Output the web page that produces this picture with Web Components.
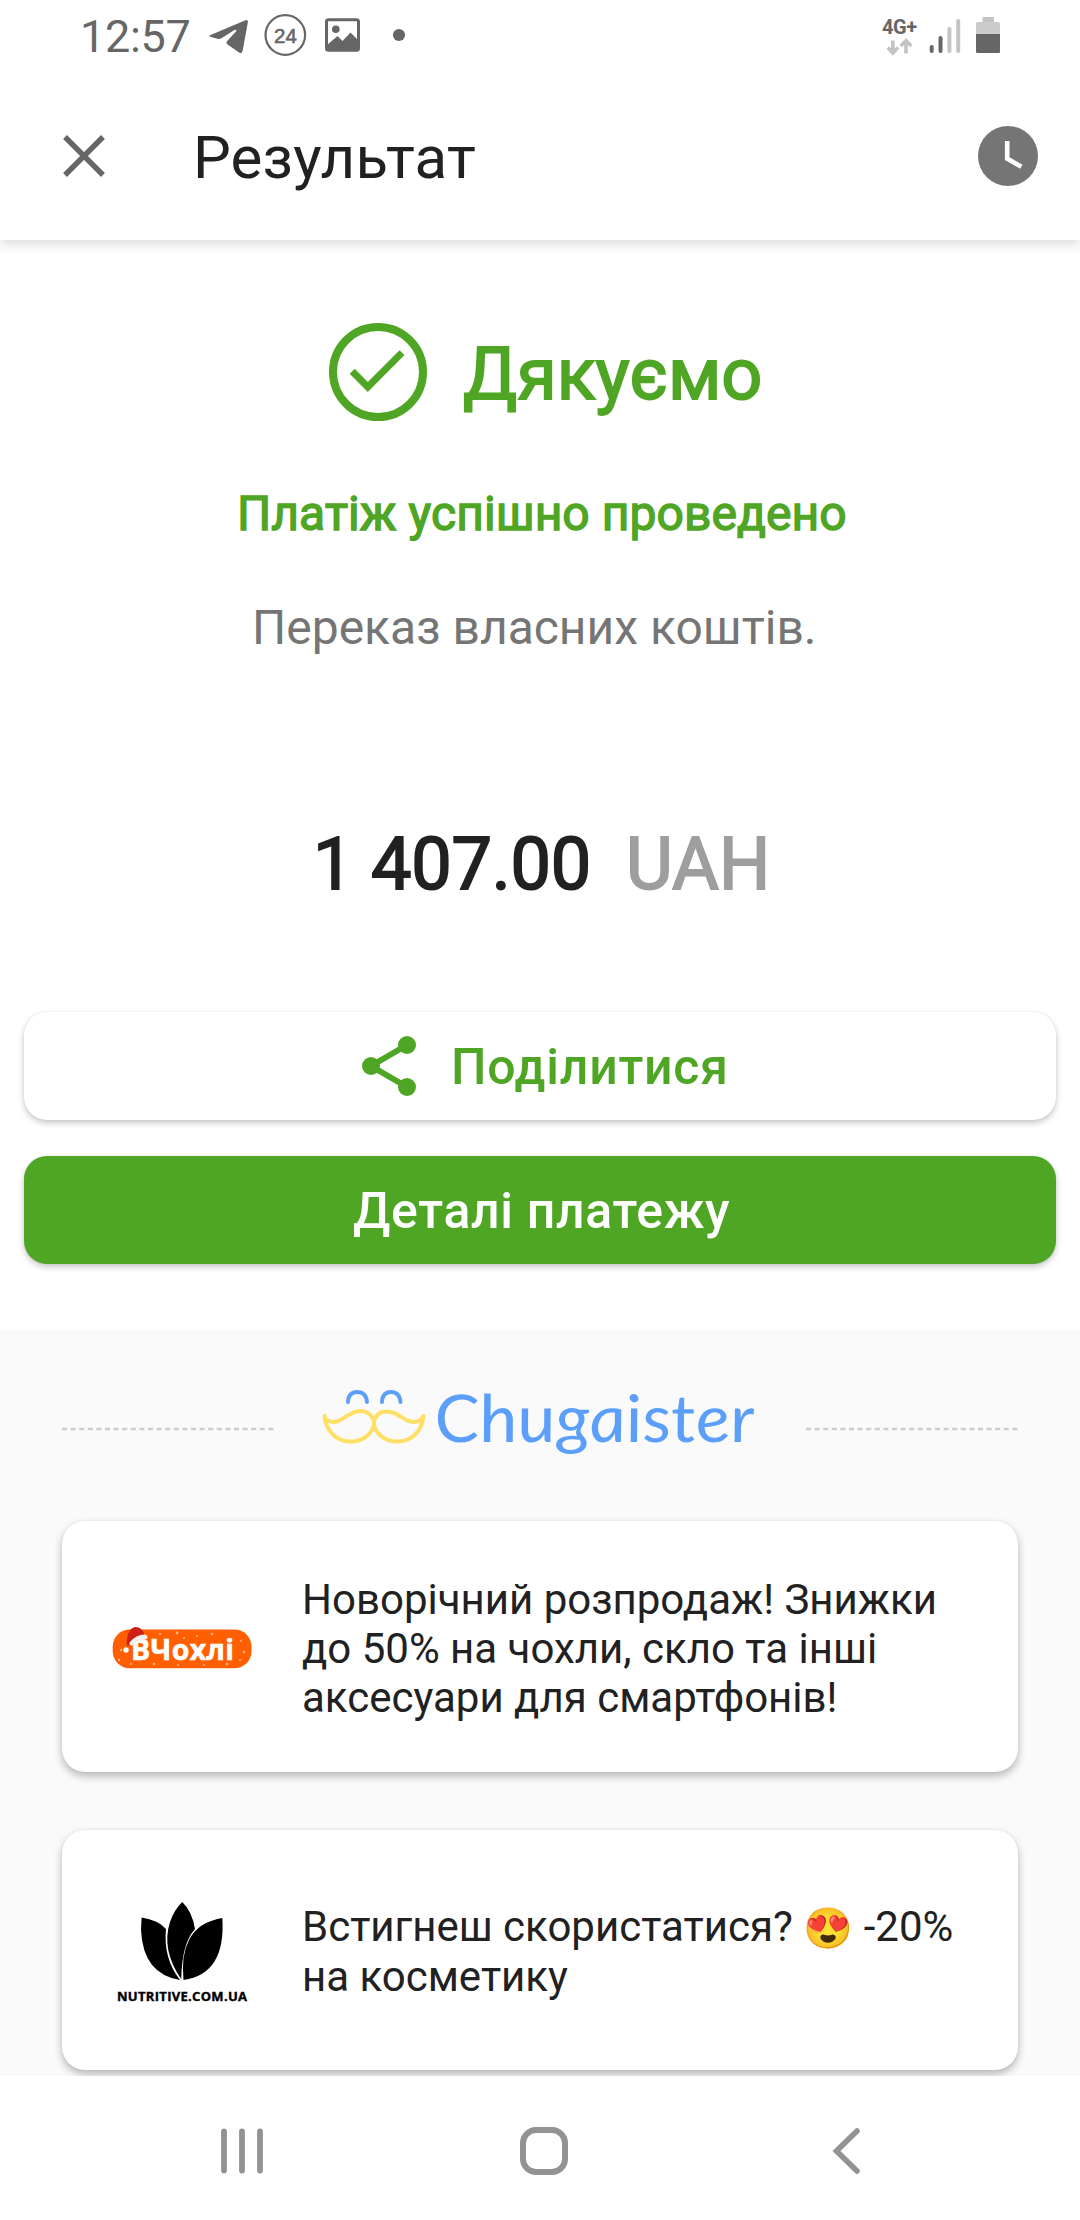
<!DOCTYPE html>
<html lang="uk">
<head>
<meta charset="utf-8">
<title>Результат</title>
<style>
html,body{margin:0;padding:0;background:#fff}
body{width:1080px;height:2220px;overflow:hidden;font-family:Roboto,"Noto Sans",sans-serif;color:#212121}
</style>
</head>
<body>
<payment-screen></payment-screen>
<script>
function define(name, html) {
  const t = document.createElement('template');
  t.innerHTML = html;
  customElements.define(name, class extends HTMLElement {
    constructor() {
      super();
      this.attachShadow({mode: 'open'}).append(t.content.cloneNode(true));
    }
  });
}

define('status-bar', `<style>
:host{display:flex;align-items:center;height:72px;padding-left:80px;color:#666;box-sizing:border-box}
svg{display:block;flex:none}
.time{width:129px;font-size:45px;line-height:72px;letter-spacing:-.3px;height:71px}
.gap{flex:1}
</style>
<span class="time">12:57</span>
<svg width="53" height="72" viewBox="209 0 53 72" fill="#666"><path d="M210 35.2 L245.5 20.2 Q248.3 19.4 247.8 22.4 L242.6 51 Q241.8 54 239 52.4 L227.6 44.6 Q225.6 43 227.2 41 L236.4 31 Q236.4 29.4 234.4 30 L221.5 38.2 Q219.5 39.3 217.2 38.8 L210.4 36.8 Q208.6 36 210 35.2Z"/></svg>
<svg width="63" height="72" viewBox="262 0 63 72"><circle cx="285.3" cy="35" r="19.8" fill="none" stroke="#666" stroke-width="2.2"/><text x="274" y="42.6" font-family="Liberation Sans,sans-serif" font-size="20.5" fill="#666" stroke="#666" stroke-width=".6">24</text></svg>
<svg width="60" height="72" viewBox="325 0 60 72"><rect x="326.5" y="19.8" width="32" height="30.5" rx="2" fill="none" stroke="#666" stroke-width="3"/><circle cx="335.8" cy="29.3" r="3.8" fill="#666"/><path d="M327 45 L337.5 36 L342.5 41 L350.5 32.5 L359 41 V51 H327Z" fill="#666"/></svg>
<svg width="30" height="72" viewBox="385 0 30 72"><circle cx="399" cy="35" r="6.1" fill="#666"/></svg>
<span class="gap"></span>
<svg width="48" height="72" viewBox="880 0 48 72"><text x="882" y="34" font-family="Roboto,sans-serif" font-weight="700" font-size="20" letter-spacing="-.4" fill="#666">4G+</text><path d="M892.8 40.5V53M887.8 47.5L892.8 53L898 47.5M906 53.5V41M900.8 46L906 40.6L911.3 46" fill="none" stroke="#c4c4c4" stroke-width="3.6"/></svg>
<svg width="40" height="72" viewBox="928 0 40 72" fill="none" stroke-width="4" stroke-linecap="round"><path d="M931.7 47V51M940.5 38V51" stroke="#666"/><path d="M949.4 29V51M958.2 21V51" stroke="#c4c4c4"/></svg>
<svg width="112" height="72" viewBox="968 0 112 72"><rect x="982.5" y="17" width="11.5" height="7" rx="1" fill="#c2c2c2"/><rect x="976" y="22" width="24" height="31" rx="1.5" fill="#cbcbcb"/><path d="M976 34H1000V51.5Q1000 53 998.5 53H977.5Q976 53 976 51.5Z" fill="#666"/></svg>`);

define('app-bar', `<style>
:host{display:flex;align-items:center;height:168px;padding:0 42px 0 63px;box-sizing:border-box;background:#fff;box-shadow:0 4px 12px rgba(0,0,0,.15);clip-path:inset(0 0 -24px 0);position:relative;z-index:1}
svg{display:block;flex:none}
h1{flex:1;margin:4px 0 0 88px;font-size:60px;line-height:80px;font-weight:400;letter-spacing:.15px}
</style>
<svg width="42" height="42" viewBox="0 0 42 42"><path d="M2 2L40 40M40 2L2 40" stroke="#666" stroke-width="5.4" fill="none"/></svg>
<h1><slot></slot></h1>
<svg width="60" height="60" viewBox="0 0 60 60"><circle cx="30" cy="30" r="30" fill="#757575"/><path d="M29.2 15V32.6L43.4 40.8" stroke="#fff" stroke-width="4.6" fill="none"/></svg>`);

define('payment-result', `<style>
:host{display:flex;flex-direction:column;height:772px;padding-top:83px;box-sizing:border-box}
svg{display:block;flex:none}
.thanks{display:flex;align-items:center;height:98px;padding-left:329px;color:#4fa524}
.thanks span{margin:6px 0 0 36px;font-size:72px;line-height:80px;letter-spacing:0;-webkit-text-stroke:1.8px #4fa524;white-space:nowrap}
.ok{margin:63px 0 0 237px;font-size:48px;line-height:60px;letter-spacing:.06px;color:#4fa524;-webkit-text-stroke:1.4px #4fa524;white-space:nowrap}
.desc{margin:54px 0 0 252px;font-size:48px;line-height:60px;color:#757575}
.sum{display:flex;margin:167px 0 0 313px;font-size:72px;line-height:80px;letter-spacing:-.2px;-webkit-text-stroke:1.8px #212121}
.sum b{font-weight:400;width:313px}
.sum i{font-style:normal;color:#9e9e9e;letter-spacing:0;-webkit-text-stroke:1.8px #9e9e9e}
</style>
<div class="thanks">
<svg width="98" height="98" viewBox="0 0 98 98" fill="none" stroke="#4fa524"><circle cx="49" cy="49" r="45" stroke-width="8"/><path d="M23.2 48.2L38.8 64L73 29.6" stroke-width="7"/></svg>
<span>Дякуємо</span></div>
<div class="ok">Платіж успішно проведено</div>
<div class="desc">Переказ власних коштів.</div>
<div class="sum"><b>1 407.00</b><i>UAH</i></div>`);

define('action-button', `<style>
:host{display:flex;align-items:center;height:108px;margin:0 24px 36px;border-radius:23px;box-sizing:border-box;font-size:50px;line-height:60px;font-weight:500;letter-spacing:.75px;color:#4fa524;background:#fff;box-shadow:0 3px 6px rgba(0,0,0,.22),0 0 2px rgba(0,0,0,.08);white-space:nowrap}
:host([kind=share]){padding-left:338px}
:host([kind=primary]){padding-left:329px;background:#4fa524;color:#fff;letter-spacing:.66px}
span{margin-top:2px}
::slotted(svg){display:block;flex:none;margin-right:35px}
</style><slot name="icon"></slot><span><slot></slot></span>`);

define('partner-logo', `<style>
:host{display:flex;align-items:center;justify-content:space-between;height:122px;padding:0 62px;margin-bottom:32px;box-sizing:border-box}
svg{display:block;flex:none}
</style>
<svg width="212" height="6" viewBox="0 0 212 6"><path d="M0 4H212" stroke="#cdcdcd" stroke-width="2.4" stroke-dasharray="5 3.6"/></svg>
<svg width="460" height="122" viewBox="310 1367 460 122" fill="none" stroke-linecap="round" stroke-linejoin="round">
<path d="M348 1402Q348.500 1392 357.300 1392Q366 1392 367 1402M382 1402Q382.500 1392 391 1392Q399.500 1392 400.500 1402" stroke="#5c9ffa" stroke-width="3.900"/>
<path d="M374 1422C372 1413 364 1409 355 1412C345 1415 339 1425 329 1421Q325 1420 324.500 1416C326 1430 335 1441 350 1441.500C363 1442 373 1433 374 1424C375 1433 385 1442 398 1441.500C413 1441 422 1430 423.500 1416Q422 1420 417 1421.500C407 1424 402 1415 391 1412C383 1410 376 1413 374 1422Z" stroke="#ffe067" stroke-width="4"/>
<text transform="translate(437 1442) skewX(7)" textLength="320" lengthAdjust="spacingAndGlyphs" font-family="Lato,sans-serif" font-style="italic" font-size="66" fill="#5c9ffa">Chugaister</text></svg>
<svg width="212" height="6" viewBox="0 0 212 6"><path d="M0 4H212" stroke="#cdcdcd" stroke-width="2.4" stroke-dasharray="5 3.6"/></svg>`);

define('promo-card', `<style>
:host{display:flex;align-items:center;margin:0 62px;border-radius:23px;background:#fff;box-sizing:border-box;box-shadow:0 4px 9px rgba(0,0,0,.28),0 0 2px rgba(0,0,0,.06);height:251px;font-size:42px;line-height:49px}
:host([short]){height:240px;line-height:50px;margin-top:58px}
.pic{width:240px;display:flex;flex:none}
.text{margin-top:4px;white-space:nowrap}
</style><div class="pic"><slot name="logo"></slot></div><div class="text"><slot></slot></div>`);

define('cases-logo', `<style>:host{display:block;margin-left:50px}svg{display:block}</style>
<svg width="142" height="50" viewBox="112 1622 142 50"><rect x="112.700" y="1629.500" width="138.800" height="38.800" rx="17" fill="#ff5f00"/>
<g fill="#ffb48a"><circle cx="121" cy="1650" r="1.200"/><circle cx="119" cy="1660" r="1.200"/><circle cx="131" cy="1664" r="1"/><circle cx="154" cy="1664" r="1.300"/><circle cx="160" cy="1634" r="1"/><circle cx="177" cy="1633" r="1.400"/><circle cx="184" cy="1638" r="1"/><circle cx="197" cy="1636" r="1"/><circle cx="212" cy="1634" r="1.300"/><circle cx="227" cy="1664" r="1.300"/><circle cx="241" cy="1641" r="1"/><circle cx="244" cy="1652" r="1.300"/><circle cx="240" cy="1660" r="1"/><circle cx="178" cy="1665" r="1"/><circle cx="204" cy="1665" r="1"/></g>
<text x="131" y="1659.500" font-family="Open Sans,sans-serif" font-weight="700" font-size="28.500" textLength="103" lengthAdjust="spacing" fill="#fff" stroke="#fff" stroke-width=".6">ВЧохлі</text>
<path d="M126.500 1644Q127 1629 135 1627Q142 1626.500 144.500 1635L133 1640L128 1646Z" fill="#cf1f16"/><path d="M129.500 1642.500Q136 1634.500 145 1634.500Q148.500 1635.500 147 1639Q139 1639 132.500 1645.500Q129 1645.500 129.500 1642.500Z" fill="#f6efee"/><circle cx="126" cy="1650" r="2.700" fill="#fff"/></svg>`);

define('leaf-logo', `<style>:host{display:block;margin-left:54px}svg{display:block;margin-bottom:-8px}</style>
<svg width="134" height="114" viewBox="116 1897 134 114"><path d="M141.600 1917.500Q158 1920 166 1929Q163 1958 180 1980Q143 1974 141 1930Z"/><path d="M182.200 1902Q192 1911 195 1929Q182 1943 181.200 1979Q161 1950 170 1922Q174 1910 182.200 1902Z"/><path d="M222.300 1918Q198 1922 189 1940Q181 1955 183.500 1980Q226 1974 222.300 1918Z"/>
<text x="117" y="2001" font-family="Open Sans,sans-serif" font-weight="700" font-size="13" textLength="130" lengthAdjust="spacing" stroke="#000" stroke-width=".4">NUTRITIVE.COM.UA</text></svg>`);

define('partner-offers', `<style>
:host{display:block;height:747px;margin-top:65px;padding-top:38px;box-sizing:border-box;background:#fafafa;overflow:hidden}
.emoji{display:inline-block;width:50px;font-size:40px;line-height:40px;height:40px;vertical-align:-1px}
</style>
<partner-logo></partner-logo>
<promo-card><cases-logo slot="logo"></cases-logo>Новорічний розпродаж! Знижки<br>до 50% на чохли, скло та інші<br>аксесуари для смартфонів!</promo-card>
<promo-card short><leaf-logo slot="logo"></leaf-logo>Встигнеш скористатися? <span class="emoji">😍</span> -20%<br>на косметику</promo-card>`);

define('nav-bar', `<style>:host{display:flex;height:144px;background:#fff}svg{display:block}</style>
<svg width="360" height="144" viewBox="0 2076 360 144"><path d="M224 2131.500V2170.500M242 2131.500V2170.500M260 2131.500V2170.500" stroke="#939393" stroke-width="5.800" stroke-linecap="round"/></svg>
<svg width="360" height="144" viewBox="360 2076 360 144"><rect x="523" y="2130" width="42" height="42" rx="13" fill="none" stroke="#939393" stroke-width="6"/></svg>
<svg width="360" height="144" viewBox="720 2076 360 144"><path d="M857 2131L836.500 2151L857 2171" fill="none" stroke="#939393" stroke-width="5.600" stroke-linecap="round"/></svg>`);

define('payment-screen', `<style>:host{display:block;width:1080px;height:2220px;background:#fff}</style>
<status-bar></status-bar>
<app-bar>Результат</app-bar>
<payment-result></payment-result>
<action-button kind="share"><svg slot="icon" width="54" height="60" viewBox="0 0 54 60"><path d="M45 9L9 30L45 51" fill="none" stroke="#4fa524" stroke-width="6"/><g fill="#4fa524"><circle cx="45" cy="9" r="9"/><circle cx="9" cy="30" r="9"/><circle cx="45" cy="51" r="9"/></g></svg>Поділитися</action-button>
<action-button kind="primary">Деталі платежу</action-button>
<partner-offers></partner-offers>
<nav-bar></nav-bar>`);
</script>
</body>
</html>
